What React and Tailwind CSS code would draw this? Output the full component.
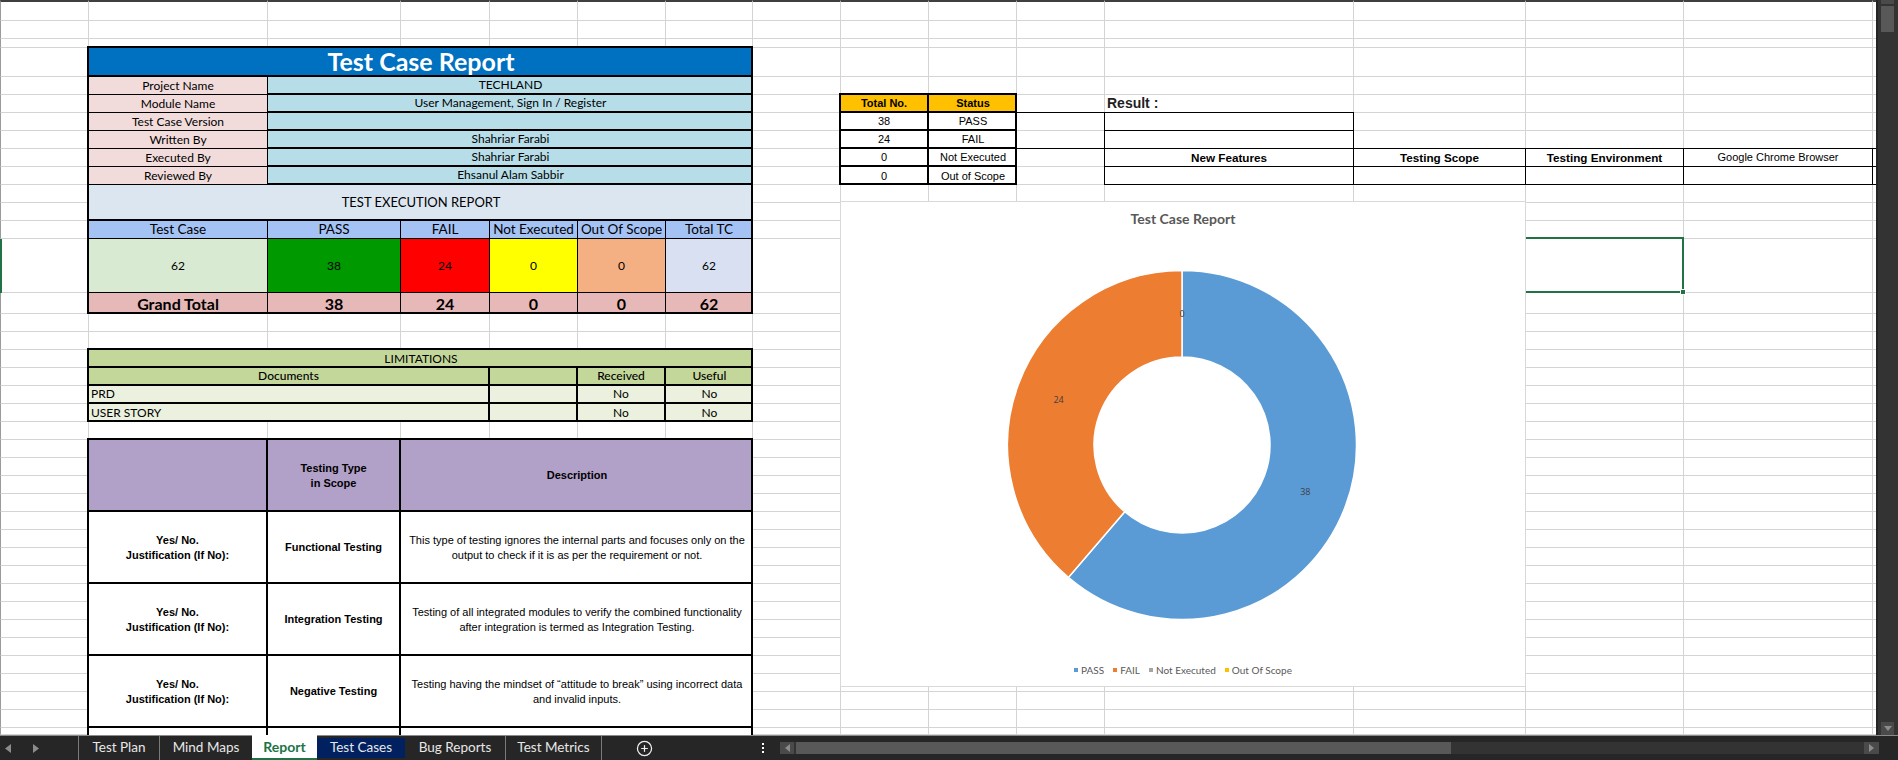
import React from "react";
import { CirclePlus } from "lucide-react";

const GRID =
  "grid grid-cols-[89px_179px_133px_89px_88px_88px_87px_88px_88px_88px_88px_249px_172px_158px_189px_3px] grid-rows-[21px_18px_9px_29px_repeat(9,18px)_54px_21px_repeat(23,18px)_7px]";

const ROW_COUNT = 39;
const COL_COUNT = 16;

// plain spreadsheet cells behind everything
const SheetCells = () => (
  <div className={`${GRID} col-start-1 row-start-1`}>
    {Array.from({ length: ROW_COUNT * COL_COUNT }).map((_, i) => {
      const firstRow = i < COL_COUNT;
      const lastCol = i % COL_COUNT === COL_COUNT - 1;
      const firstCol = i % COL_COUNT === 0;
      return (
        <div
          key={i}
          className={`border-b border-[#d4d4d4] ${lastCol ? "" : "border-r"} ${firstRow ? "border-t-2 border-t-[#3f3f3f]" : ""} ${firstCol ? "border-l border-l-[#9a9a9a]" : ""}`}
        />
      );
    })}
  </div>
);

const Frame = ({ className }) => (
  <div className={`-mt-0.5 -ml-0.5 border-2 border-black pointer-events-none ${className}`} />
);

const center = "flex items-center justify-center text-center";

const infoRows = [
  ["Project Name", "TECHLAND", "row-[5/6]"],
  ["Module Name", "User Management, Sign In / Register", "row-[6/7]"],
  ["Test Case Version", "", "row-[7/8]"],
  ["Written By", "Shahriar Farabi", "row-[8/9]"],
  ["Executed By", "Shahriar Farabi", "row-[9/10]"],
  ["Reviewed By", "Ehsanul Alam Sabbir", "row-[10/11]"],
];

const execCols = [
  ["col-[2/3]", "Test Case", "62", "bg-[#d9ead3]", "Grand Total"],
  ["col-[3/4]", "PASS", "38", "bg-[#009900]", "38"],
  ["col-[4/5]", "FAIL", "24", "bg-[#ff0000]", "24"],
  ["col-[5/6]", "Not Executed", "0", "bg-[#ffff00]", "0"],
  ["col-[6/7]", "Out Of Scope", "0", "bg-[#f4b083]", "0"],
  ["col-[7/8]", "Total TC", "62", "bg-[#d9e0f2]", "62"],
];

const ReportTable = () => (
  <>
    <div className={`col-[2/8] row-[4/5] ${center} bg-[#0070c0] border-b-2 border-black text-white font-bold text-[25px] leading-none`}>
      Test Case Report
    </div>
    {infoRows.map(([label, value, row]) => (
      <React.Fragment key={label}>
        <div className={`col-[2/3] ${row} ${center} bg-[#f2dcdb] border-r border-b border-black text-[12px] leading-none pt-px`}>
          {label}
        </div>
        <div className={`col-[3/8] ${row} ${center} bg-[#b7dde8] border-b-2 border-black text-[12px] leading-none`}>
          {value}
        </div>
      </React.Fragment>
    ))}
    <div className={`col-[2/8] row-[11/13] ${center} bg-[#dce6f1] border-b-2 border-black text-[13px] pt-0.5`}>
      TEST EXECUTION REPORT
    </div>
    {execCols.map(([col, head, val, bg, total]) => (
      <React.Fragment key={head}>
        <div className={`${col} row-[13/14] ${center} bg-[#a4c2f4] border-r border-b border-black text-[13.5px] leading-none whitespace-nowrap pt-px`}>
          {head}
        </div>
        <div className={`${col} row-[14/15] ${center} ${bg} border-r border-b border-black text-[12px]`}>
          {val}
        </div>
        <div className={`${col} row-[15/16] ${center} bg-[#e6b8b7] border-r border-black font-bold text-[16px] leading-none`}>
          {total}
        </div>
      </React.Fragment>
    ))}
    <Frame className="col-[2/8] row-[4/16]" />
  </>
);

const LimitationsTable = () => (
  <>
    <div className={`col-[2/8] row-[18/19] ${center} bg-[#c4d79b] border-b-2 border-black text-[12px] pt-0.5`}>LIMITATIONS</div>
    <div className={`col-[2/5] row-[19/20] ${center} bg-[#c4d79b] border-r-2 border-b-2 border-black text-[12px] font-medium`}>Documents</div>
    <div className="col-[5/6] row-[19/20] bg-[#c4d79b] border-r-2 border-b-2 border-black" />
    <div className={`col-[6/7] row-[19/20] ${center} bg-[#c4d79b] border-r-2 border-b-2 border-black text-[12px] font-medium`}>Received</div>
    <div className={`col-[7/8] row-[19/20] ${center} bg-[#c4d79b] border-b-2 border-black text-[12px] font-medium`}>Useful</div>

    <div className="col-[2/5] row-[20/21] flex items-center pl-0.5 bg-[#ebf1de] border-r-2 border-b-2 border-black text-[12px]">PRD</div>
    <div className="col-[5/6] row-[20/21] bg-[#ebf1de] border-r-2 border-b-2 border-black" />
    <div className={`col-[6/7] row-[20/21] ${center} bg-[#ebf1de] border-r-2 border-b-2 border-black text-[12px]`}>No</div>
    <div className={`col-[7/8] row-[20/21] ${center} bg-[#ebf1de] border-b-2 border-black text-[12px]`}>No</div>

    <div className="col-[2/5] row-[21/22] flex items-center pl-0.5 bg-[#ebf1de] border-r-2 border-black text-[12px]">USER STORY</div>
    <div className="col-[5/6] row-[21/22] bg-[#ebf1de] border-r-2 border-black" />
    <div className={`col-[6/7] row-[21/22] ${center} bg-[#ebf1de] border-r-2 border-black text-[12px]`}>No</div>
    <div className={`col-[7/8] row-[21/22] ${center} bg-[#ebf1de] text-[12px]`}>No</div>
    <Frame className="col-[2/8] row-[18/22]" />
  </>
);

const scopeRows = [
  {
    row: "row-[27/31]",
    type: "Functional Testing",
    desc: ["This type of testing ignores the internal parts and focuses only on the", "output to check if it is as per the requirement or not."],
  },
  {
    row: "row-[31/35]",
    type: "Integration Testing",
    desc: ["Testing of all integrated modules to verify the combined functionality", "after integration is termed as Integration Testing."],
  },
  {
    row: "row-[35/39]",
    type: "Negative Testing",
    desc: ["Testing having the mindset of \u201Cattitude to break\u201D using incorrect data", "and invalid inputs."],
  },
];

const arial = "font-['Liberation_Sans',Arial,sans-serif] text-[11px] leading-[15px]";

const ScopeTable = () => (
  <>
    <div className="col-[2/3] row-[23/27] bg-[#b1a0c7] border-r-2 border-b-2 border-black" />
    <div className={`col-[3/4] row-[23/27] ${center} ${arial} bg-[#b1a0c7] border-r-2 border-b-2 border-black font-bold pt-0.5`}>
      Testing Type<br />in Scope
    </div>
    <div className={`col-[4/8] row-[23/27] ${center} ${arial} bg-[#b1a0c7] border-b-2 border-black font-bold`}>
      Description
    </div>
    {scopeRows.map((r) => (
      <React.Fragment key={r.type}>
        <div className={`col-[2/3] ${r.row} ${center} ${arial} bg-white border-r-2 border-b-2 border-black font-bold pt-0.5`}>
          Yes/ No.<br />Justification (If No):
        </div>
        <div className={`col-[3/4] ${r.row} ${center} ${arial} bg-white border-r-2 border-b-2 border-black font-bold`}>
          {r.type}
        </div>
        <div className={`col-[4/8] ${r.row} ${center} ${arial} bg-white border-b-2 border-black whitespace-nowrap pt-0.5`}>
          <div>{r.desc[0]}<br />{r.desc[1]}</div>
        </div>
      </React.Fragment>
    ))}
    <div className="col-[2/3] row-[39/40] bg-white border-r-2 border-black" />
    <div className="col-[3/4] row-[39/40] bg-white border-r-2 border-black" />
    <div className="col-[4/8] row-[39/40] bg-white" />
    <div className="col-[2/8] row-[23/40] -mt-0.5 -ml-0.5 border-2 border-b-0 border-black pointer-events-none" />
  </>
);

const statusRows = [
  ["38", "PASS", "row-[7/8]"],
  ["24", "FAIL", "row-[8/9]"],
  ["0", "Not Executed", "row-[9/10]"],
  ["0", "Out of Scope", "row-[10/11]"],
];

const StatusTable = () => (
  <>
    <div className={`col-[9/10] row-[6/7] ${center} ${arial} bg-[#ffc000] border-r-2 border-b-2 border-black font-bold`}>Total No.</div>
    <div className={`col-[10/11] row-[6/7] ${center} ${arial} bg-[#ffc000] border-b-2 border-black font-bold`}>Status</div>
    {statusRows.map(([n, s, row], i) => (
      <React.Fragment key={s}>
        <div className={`col-[9/10] ${row} ${center} ${arial} bg-white border-r-2 border-black ${i < 3 ? "border-b-2" : ""}`}>{n}</div>
        <div className={`col-[10/11] ${row} ${center} ${arial} bg-white border-black ${i < 3 ? "border-b-2" : ""}`}>{s}</div>
      </React.Fragment>
    ))}
    <Frame className="col-[9/11] row-[6/11]" />
  </>
);

const thinCell = `-mt-px -ml-px border border-black ${center}`;
const thinText = "font-['Liberation_Sans',Arial,sans-serif] text-[11px]";
const thinHead = "font-['Liberation_Sans',Arial,sans-serif] text-[11.7px] font-bold";

const ResultBlock = () => (
  <>
    <div className="col-[11/12] row-[7/8] -mt-px border-t border-black" />
    <div className="col-[11/12] row-[9/10] -mt-px border-t border-black" />
    <div className="col-[12/14] row-[6/7] flex items-center pl-0.5 pb-0.5 font-['Liberation_Sans',Arial,sans-serif] font-bold text-[14px] text-[#1f1f1f]">
      Result :
    </div>
    <div className={`col-[12/13] row-[7/8] ${thinCell}`} />
    <div className={`col-[12/13] row-[8/9] ${thinCell}`} />
    <div className={`col-[12/13] row-[9/10] ${thinCell} ${thinHead}`}>New Features</div>
    <div className={`col-[13/14] row-[9/10] ${thinCell} ${thinHead}`}>Testing Scope</div>
    <div className={`col-[14/15] row-[9/10] ${thinCell} ${thinHead}`}>Testing Environment</div>
    <div className={`col-[15/16] row-[9/10] ${thinCell} ${thinText}`}>Google Chrome Browser</div>
    <div className="col-[16/17] row-[9/10] -mt-px -ml-px border-y border-l border-black" />
    <div className={`col-[12/13] row-[10/11] ${thinCell}`} />
    <div className={`col-[13/14] row-[10/11] ${thinCell}`} />
    <div className={`col-[14/15] row-[10/11] ${thinCell}`} />
    <div className={`col-[15/16] row-[10/11] ${thinCell}`} />
    <div className="col-[16/17] row-[10/11] -mt-px -ml-px border-y border-l border-black" />
  </>
);

const Selection = () => (
  <>
    <div className="col-[1/2] row-[14/15] border-l-2 border-[#217346]" />
    <div className="col-[14/15] row-[14/15] relative -mt-0.5 border-y-2 border-r-2 border-[#217346]">
      <span className="absolute -right-[4px] -bottom-[4px] w-[6px] h-[6px] bg-[#217346] border border-white" />
    </div>
  </>
);

const legend = [
  ["PASS", "bg-[#5b9bd5]"],
  ["FAIL", "bg-[#ed7d31]"],
  ["Not Executed", "bg-[#a5a5a5]"],
  ["Out Of Scope", "bg-[#ffc000]"],
];

const Chart = () => (
  <div className="col-[9/14] row-[12/36] -mt-0.5 -ml-px -mb-[13px] z-10 bg-white border border-[#d9d9d9] flex flex-col items-center">
    <div className="h-[67px] pt-[7px] text-[14px] leading-5 font-bold text-[#595959]">Test Case Report</div>
    <svg width="352" height="352" viewBox="0 0 352 352" className="-ml-[3px]">
      <path
        d="M176 1.5A174.5 174.5 0 1 1 62.35 308.41L118.69 242.77A88 88 0 1 0 176 88Z"
        fill="#5b9bd5"
        stroke="#fff"
        strokeWidth="1.5"
      />
      <path
        d="M62.35 308.41A174.5 174.5 0 0 1 176 1.5L176 88A88 88 0 0 0 118.69 242.77Z"
        fill="#ed7d31"
        stroke="#fff"
        strokeWidth="1.5"
      />
      <g fontSize="9" fill="#404040" textAnchor="middle" fontFamily="'Open Sans', sans-serif">
        <text x="176" y="48">0</text>
        <text x="52.6" y="134">24</text>
        <text x="299.3" y="226">38</text>
      </g>
    </svg>
    <div className="mt-[44px] flex items-center gap-[9px] text-[10px] leading-none text-[#595959]">
      {legend.map(([name, swatch]) => (
        <div key={name} className="flex items-center gap-[3px]">
          <span className={`w-1 h-1 ${swatch}`} />
          {name}
        </div>
      ))}
    </div>
  </div>
);

const tabs = [
  ["Test Plan", "w-[81px] text-[13.5px] border-l border-[#7a7a7a] text-[#e8e8e8]"],
  ["Mind Maps", "w-[93px] text-[13.5px] border-l border-[#7a7a7a] text-[#e8e8e8]"],
  ["Report", "w-[65px] text-[14px] -mt-px bg-white border-b-2 border-[#217346] text-[#217346] font-bold"],
  ["Test Cases", "w-[88px] text-[13.5px] my-[2px] bg-[#002060] text-[#e8e8e8]"],
  ["Bug Reports", "w-[100px] text-[13.5px] text-[#e8e8e8]"],
  ["Test Metrics", "w-[97px] text-[13.5px] border-x border-[#7a7a7a] text-[#e8e8e8]"],
];

const BottomBar = () => (
  <div className="h-[25px] flex bg-[#262626] border-t border-[#8a8a8a] font-['Lato',sans-serif]">
    <div className="w-[78px] flex items-center text-[#8c8c8c]">
      <svg width="6" height="9" viewBox="0 0 6 9" className="ml-[5px]"><path d="M6 0V9L0 4.5Z" fill="currentColor" /></svg>
      <svg width="6" height="9" viewBox="0 0 6 9" className="ml-[22px]"><path d="M0 0V9L6 4.5Z" fill="currentColor" /></svg>
    </div>
    {tabs.map(([name, cls]) => (
      <div key={name} className={`flex items-center justify-center leading-none ${cls}`}>
        {name}
      </div>
    ))}
    <div className="w-[178px] flex items-center">
      <CirclePlus size={17} strokeWidth={1.75} className="ml-[34px] text-[#f0f0f0]" />
      <div className="ml-[109px] flex flex-col gap-[2px]">
        <span className="w-[2px] h-[2px] bg-white" />
        <span className="w-[2px] h-[2px] bg-white" />
        <span className="w-[2px] h-[2px] bg-white" />
      </div>
    </div>
    <div className="flex-1 flex">
      <div className="w-[1099px] my-[6px] flex bg-[#333333]">
        <div className="w-[14px] flex items-center justify-center bg-[#4a4a4a]">
          <svg width="5" height="8" viewBox="0 0 5 8"><path d="M5 0V8L0 4Z" fill="#8c8c8c" /></svg>
        </div>
        <div className="w-[655px] ml-[2px] bg-[#585858]" />
        <div className="ml-auto w-[15px] flex items-center justify-center bg-[#4a4a4a]">
          <svg width="5" height="8" viewBox="0 0 5 8"><path d="M0 0V8L5 4Z" fill="#8c8c8c" /></svg>
        </div>
      </div>
    </div>
  </div>
);

const VerticalScroll = () => (
  <div className="w-[22px] flex flex-col bg-[#333333] border-l-2 border-[#242424] pl-[3px] pr-[4px]">
    <div className="h-1 bg-[#4a4a4a]" />
    <div className="h-[26px] mt-[2px] bg-[#585858]" />
    <div className="mt-auto h-[13px] flex items-center justify-center bg-[#4a4a4a]">
      <svg width="8" height="5" viewBox="0 0 8 5"><path d="M0 0H8L4 5Z" fill="#8c8c8c" /></svg>
    </div>
  </div>
);

export default function App() {
  return (
    <div className="w-[1898px] h-[760px] overflow-hidden flex flex-col bg-white text-black font-['Lato',sans-serif]">
      <div className="h-[735px] flex">
        <div className="w-[1876px] grid">
          <SheetCells />
          <div className={`${GRID} col-start-1 row-start-1`}>
            <ReportTable />
            <LimitationsTable />
            <ScopeTable />
            <StatusTable />
            <ResultBlock />
            <Selection />
            <Chart />
          </div>
        </div>
        <VerticalScroll />
      </div>
      <BottomBar />
    </div>
  );
}
